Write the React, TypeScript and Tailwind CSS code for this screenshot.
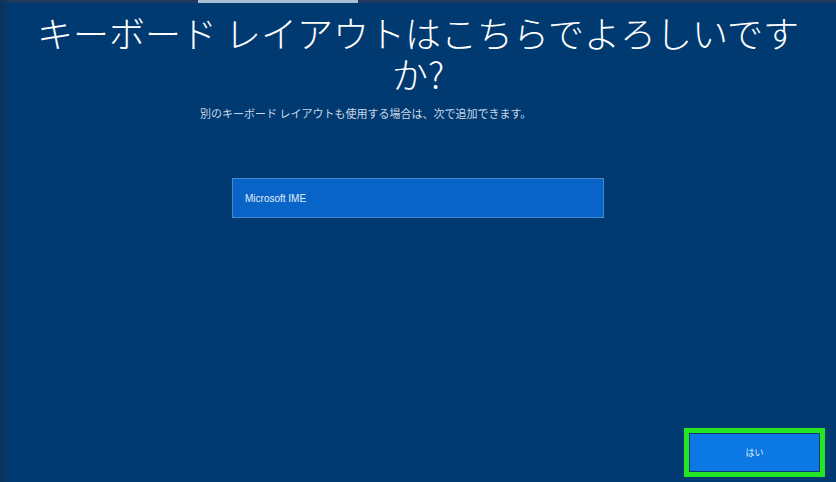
export default function App() {
  const jp = { fontFamily: '"Noto Sans CJK JP", "Noto Sans", sans-serif' };
  return (
    <div
      className="relative w-full h-[482px] bg-[#003a70] flex flex-col overflow-hidden text-white"
      style={jp}
    >
      {/* left edge shade */}
      <div className="absolute left-0 top-0 bottom-0 w-[10px] bg-gradient-to-r from-[#0d3358] to-transparent" />

      {/* top progress strip */}
      <div className="h-[3px] bg-[#1f3a5e] flex">
        <div className="ml-[198px] w-[160px] bg-[#a9bdd4]" />
      </div>

      <h1 className="mt-[9px] text-center text-[36px] leading-[41px] font-light">
        キーボード レイアウトはこちらでよろしいです
        <br />
        か?
      </h1>

      <p className="mt-[11px] pl-[200px] text-[11px] leading-[16px] text-[#c9d7e8]">
        別のキーボード レイアウトも使用する場合は、次で追加できます。
      </p>

      <div className="mt-[57px] ml-[232px] w-[372px] h-[40px] flex items-center pl-[12px] bg-[#0864c6] border border-[#4689d3]">
        <span className="text-[10px] text-[#e4eefa]" style={{ fontFamily: '"Liberation Sans", Arial, sans-serif' }}>
          Microsoft IME
        </span>
      </div>

      <div className="mt-auto mb-[5px] mr-[11px] self-end border-[5px] border-[#25e625] p-[1px] bg-[#0a3a6a]">
        <div className="w-[129px] h-[37px] bg-[#0b78e4] flex items-center justify-center">
          <span className="text-[9px] text-[#dbe9fa]">はい</span>
        </div>
      </div>
    </div>
  );
}
